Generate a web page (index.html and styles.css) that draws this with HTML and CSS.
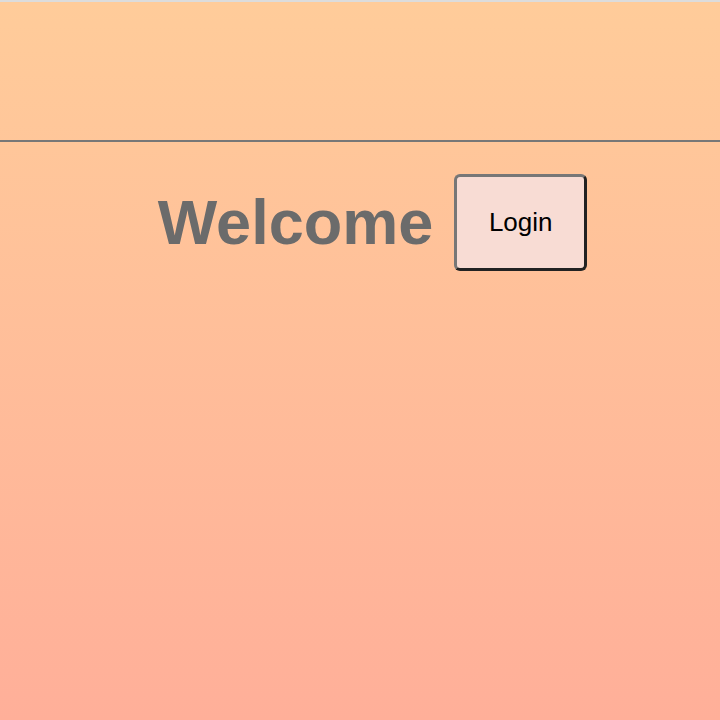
FILE: index.html
```html
<!DOCTYPE html>
<html>
<head>
<meta charset="utf-8">
<link rel="stylesheet" href="styles.css">
</head>
<body>
<div class="topline"></div>
<header class="header"></header>
<main class="hero">
  <h1 class="title">Welcome</h1>
  <button class="login">Login</button>
</main>
</body>
</html>
```

FILE: styles.css
```css
html, body {
  margin: 0;
  padding: 0;
  height: 100%;
}
body {
  background: linear-gradient(180deg, #ffcc9a 0%, #ffaf99 100%);
  font-family: "Liberation Sans", Arial, sans-serif;
}
.topline {
  height: 2px;
  background: #dcdcdc;
}
.header {
  height: 138px;
  border-bottom: 2px solid #777777;
}
.hero {
  display: flex;
  align-items: center;
  justify-content: center;
  gap: 21px;
  padding-left: 25px;
  margin-top: 32px;
}
.title {
  margin: 0;
  font-size: 63px;
  font-weight: bold;
  color: #6b6b6b;
  line-height: 1;
}
.login {
  width: 133px;
  height: 97px;
  box-sizing: border-box;
  background: #f8dcd4;
  border: 3px solid;
  border-color: #777777 #222222 #222222 #777777;
  border-radius: 6px;
  font-family: "Liberation Sans", Arial, sans-serif;
  font-size: 26px;
  color: #000;
  padding: 0;
}
```
